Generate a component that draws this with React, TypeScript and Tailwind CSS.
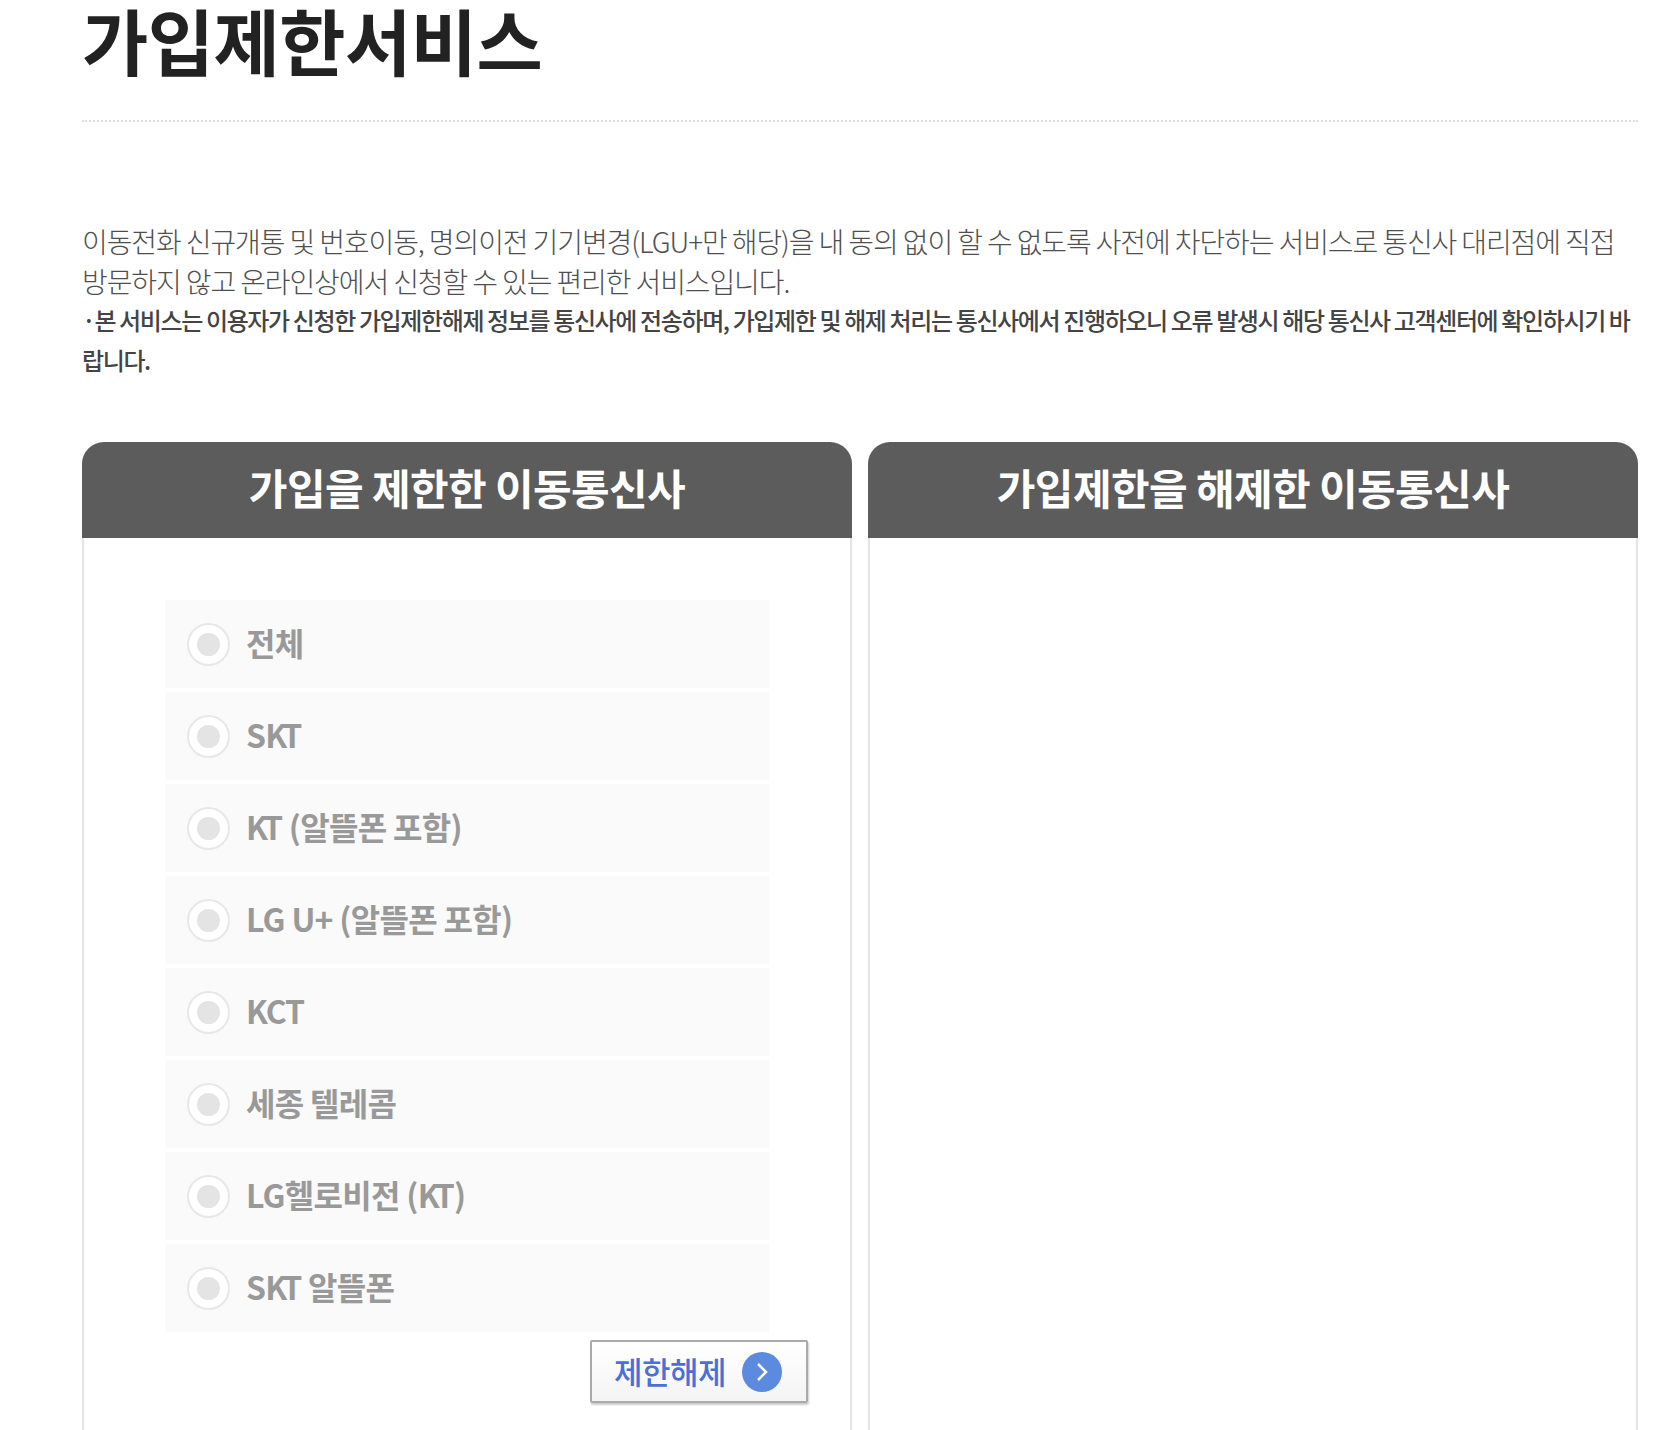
import { ReactNode } from "react";

// the K-T pair sits tighter in the reference than the fallback font kerns it
const TightK = () => <span className="tracking-[-5px]">K</span>;

const carriers: { id: string; label: ReactNode }[] = [
  { id: "all", label: "전체" },
  { id: "skt", label: <>S<TightK />T</> },
  { id: "kt", label: <><TightK />T (알뜰폰 포함)</> },
  { id: "lgu", label: "LG U+ (알뜰폰 포함)" },
  { id: "kct", label: <span className="tracking-[-1.2px]">KCT</span> },
  { id: "sejong", label: "세종 텔레콤" },
  { id: "hello", label: <>LG헬로비전 (<TightK />T)</> },
  { id: "sktm", label: <>S<TightK />T 알뜰폰</> },
];

const font = "font-['Noto_Sans_CJK_KR','Noto_Sans',sans-serif]";

const Radio = () => (
  <span className="flex h-[43px] w-[43px] shrink-0 items-center justify-center rounded-full border-2 border-[#e8e8e8] bg-white">
    <span className="h-[23px] w-[23px] rounded-full bg-[#e4e4e4]" />
  </span>
);

const App = () => {
  return (
    <div className={`h-[1430px] overflow-hidden bg-white pl-[82px] pr-[38px] ${font}`}>
      {/* Title */}
      <h1 className="h-[120px] text-[72px] leading-[77px] font-bold tracking-[-0.5px] text-[#222222]">
        가입제한서비스
      </h1>
      <div className="border-t-2 border-dotted border-[#dddddd]" />

      {/* Description */}
      <div className="mt-[99px] leading-[40px]">
        <p className="break-all text-[28px] font-light tracking-[-1.1px] text-[#4f4f4f]">
          이동전화 신규개통 및 번호이동, 명의이전 기기변경(LGU+만 해당)을 내 동의 없이 할 수 없도록 사전에 차단하는
          서비스로 통신사 대리점에 직접 방문하지 않고 온라인상에서 신청할 수 있는 편리한 서비스입니다.
        </p>
        <p className="-mt-[1px] break-all text-[24px] font-medium tracking-[-1.38px] text-[#444444]">
          ·본 서비스는 이용자가 신청한 가입제한해제 정보를 통신사에 전송하며, 가입제한 및 해제 처리는 통신사에서
          진행하오니 오류 발생시 해당 통신사 고객센터에 확인하시기 바랍니다.
        </p>
      </div>

      {/* Panels */}
      <div className="mt-[62px] grid grid-cols-2 gap-4">
        <section>
          <h2 className="flex h-24 items-center justify-center rounded-t-[22px] bg-[#5c5c5c] pb-2 text-[42px] font-bold tracking-[-0.6px] text-white">
            가입을 제한한 이동통신사
          </h2>
          <div className="h-[900px] border-x-2 border-[#e4e4e4] pt-[62px]">
            <ul className="mx-[81px] flex flex-col gap-1">
              {carriers.map((item) => (
                <li key={item.id} className="flex h-[88px] items-center gap-4 bg-[#fafafa] pl-[22px]">
                  <Radio />
                  <span className="pb-1 text-[32px] font-bold tracking-[-0.7px] text-[#999999]">{item.label}</span>
                </li>
              ))}
            </ul>
            <div className="mt-[8px] mr-[42px] flex justify-end">
              <button className="flex h-[63px] w-[218px] items-center justify-center gap-4 rounded-[2px] border-2 border-[#aaaaaa] bg-gradient-to-b from-white to-[#f4f4f4] pr-[2px] text-[31px] font-medium tracking-[-0.5px] text-[#4a6fd8] shadow-[1px_2px_2px_rgba(0,0,0,0.2)]">
                제한해제
                <span className="flex h-10 w-10 items-center justify-center rounded-full bg-[#5b8adf]">
                  <svg width="16" height="22" viewBox="0 0 16 22" fill="none" stroke="white" strokeWidth="2.5">
                    <path d="M4 3l8 8-8 8" />
                  </svg>
                </span>
              </button>
            </div>
          </div>
        </section>
        <section>
          <h2 className="flex h-24 items-center justify-center rounded-t-[22px] bg-[#5c5c5c] pb-2 text-[42px] font-bold tracking-[-0.6px] text-white">
            가입제한을 해제한 이동통신사
          </h2>
          <div className="h-[900px] border-x-2 border-[#e4e4e4]" />
        </section>
      </div>
    </div>
  );
};

export default App;
